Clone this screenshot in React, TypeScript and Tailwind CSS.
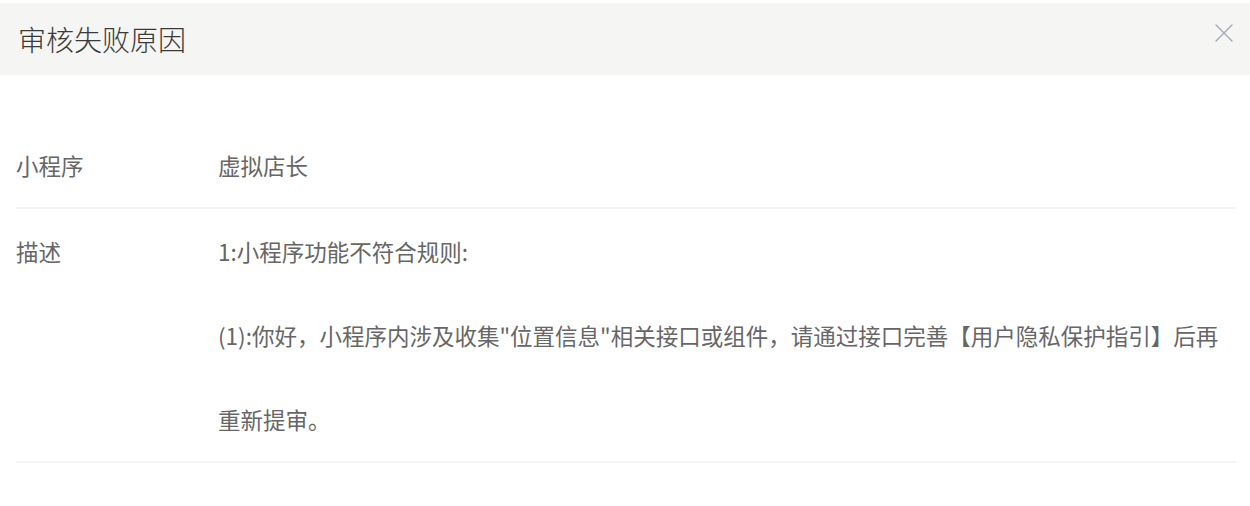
const rows = [
  { label: "小程序", lines: ["虚拟店长"] },
  {
    label: "描述",
    lines: [
      "1:小程序功能不符合规则:",
      '(1):你好，小程序内涉及收集"位置信息"相关接口或组件，请通过接口完善【用户隐私保护指引】后再重新提审。',
    ],
  },
];

const CloseIcon = () => (
  <svg width="18" height="18" viewBox="0 0 18 18" fill="none">
    <path
      d="M1 1L17 17M17 1L1 17"
      stroke="currentColor"
      strokeWidth="1.4"
      strokeLinecap="round"
    />
  </svg>
);

const App = () => {
  return (
    <div
      className="w-[1250px] h-[506px] bg-white pt-[3px]"
      style={{ fontFamily: '"Noto Sans CJK SC", "Noto Sans", sans-serif' }}
    >
      <div className="flex justify-between h-[72px] bg-[#f5f5f3] pl-[18px] pr-[17px]">
        <h2 className="self-center text-[28px] leading-none text-[#3a3a3a] font-light">
          审核失败原因
        </h2>
        <button className="mt-[21px] h-[18px] text-[#a3a9b4]">
          <CloseIcon />
        </button>
      </div>

      <div className="pt-[48px] pl-[16px] pr-[14px]">
        {rows.map((row) => (
          <div
            key={row.label}
            className="flex border-b-2 border-[#f3f3f3] text-[22.5px] leading-[84px] text-[#666666]"
          >
            <div className="w-[202px] shrink-0">{row.label}</div>
            <div className="flex-1 min-w-0">
              {row.lines.map((line) => (
                <p key={line}>{line}</p>
              ))}
            </div>
          </div>
        ))}
      </div>
    </div>
  );
};

export default App;
